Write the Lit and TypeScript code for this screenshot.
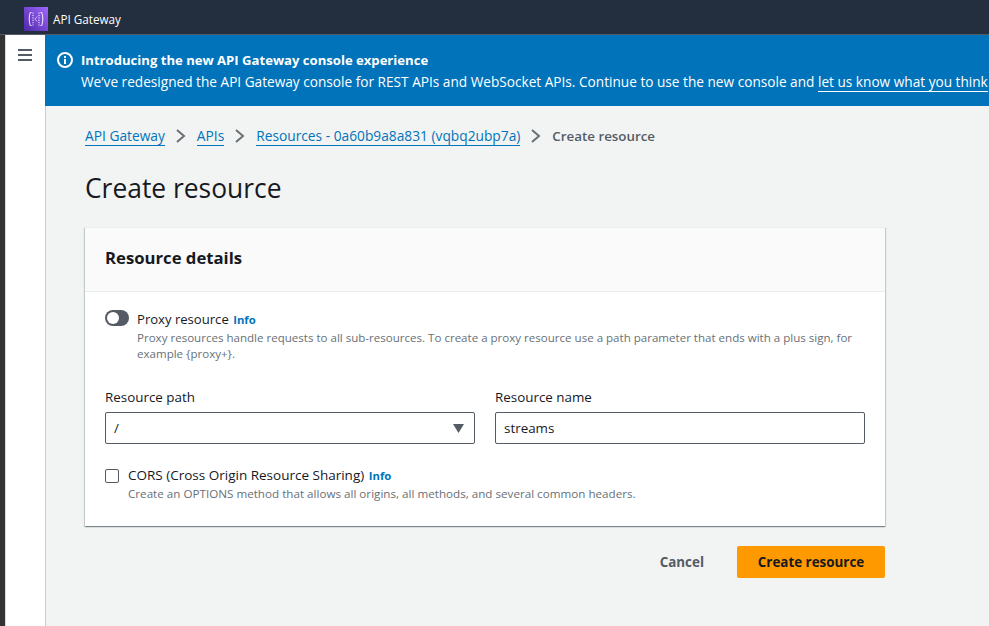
import { LitElement, html, css } from 'lit'
import { customElement } from 'lit/decorators.js'

@customElement('app-root')
export class AppRoot extends LitElement {
  static styles = css`
    :host {
      display: block;
      width: 989px;
      height: 626px;
      overflow: hidden;
      background: #f2f3f3;
      font-family: "Open Sans", "Noto Sans", sans-serif;
      font-size: 13.4px;
      color: #16191f;
    }
    .shell { display: flex; flex-direction: column; height: 626px; border-left: 5px solid #333; box-sizing: border-box; }
    .top {
      height: 35px;
      flex: none;
      margin-left: -5px;
      box-sizing: border-box;
      background: #232f3e;
      border-bottom: 1px solid #545b64;
      display: flex;
      align-items: center;
      padding: 4px 0 0 24px;
      gap: 5px;
      color: #fff;
      font-size: 11.7px;
    }
    .logo { width: 24px; height: 24px; display: block; }
    .body { flex: 1; display: flex; min-height: 0; }
    .side {
      width: 41px;
      flex: none;
      background: #fff;
      border-left: 1px solid #d5dbdb;
      border-right: 1px solid #c8cccc;
      padding: 14px 0 0 12px;
      box-sizing: border-box;
    }
    .burger { display: block; width: 14px; height: 12px; }
    .main { flex: 1; min-width: 0; overflow: hidden; margin-left: -1px; position: relative; }
    .flash {
      height: 71px;
      background: #0073bb;
      color: #fff;
      display: flex;
      padding: 14px 0 0 12px;
      box-sizing: border-box;
      gap: 8px;
      white-space: nowrap;
      font-size: 13.65px;
      line-height: 22px;
    }
    .flash svg { width: 16px; height: 16px; flex: none; margin-top: 3px; }
    .flash b { display: block; font-weight: 700; font-size: 13.1px; }
    .flash a { color: #fff; border-bottom: 1px solid #fff; }
    .content { padding: 19px 0 0 40px; width: 800px; }
    .crumbs { display: flex; align-items: center; height: 22px; font-size: 13.75px; white-space: nowrap; }
    .crumbs a { color: #0073bb; border-bottom: 1px solid #0073bb; line-height: 18px; }
    .crumbs svg { width: 12px; height: 14px; margin: 0 10px; flex: none; }
    .crumbs span { color: #545b64; font-weight: 600; font-size: 13.35px; }
    h1 { margin: 23px 0 0; font-size: 26.4px; font-weight: 400; line-height: 36px; height: 36px; }
    .card {
      margin-top: 21px;
      background: #fff;
      box-shadow: 0 1px 1px 0 rgba(0, 28, 36, 0.3), 1px 1px 1px 0 rgba(0, 28, 36, 0.15), -1px 1px 1px 0 rgba(0, 28, 36, 0.15);
      border-top: 1px solid #eaeded;
    }
    .card-head {
      height: 63px;
      background: #fafafa;
      border-bottom: 1px solid #eaeded;
      padding: 0 20px;
      display: flex;
      align-items: center;
      font-size: 16.7px;
      font-weight: 700;
    }
    .card-head span { margin-top: -4px; }
    .card-body { padding: 18px 20px 24px; }
    .opt { display: flex; align-items: flex-start; }
    .toggle {
      width: 24px;
      height: 16px;
      border-radius: 8px;
      background: #545b64;
      flex: none;
      margin: 0 8px 0 0;
      position: relative;
    }
    .toggle i { position: absolute; left: 2px; top: 2px; width: 12px; height: 12px; border-radius: 50%; background: #fff; }
    .check {
      width: 12px;
      height: 12px;
      border: 1px solid #545b64;
      border-radius: 2px;
      background: #fff;
      flex: none;
      margin: 3px 9px 0 0;
    }
    .opt-label { line-height: 18px; font-size: 13.5px; }
    .opt-label.proxy { font-size: 13.1px; }
    .info { color: #0073bb; font-size: 11.3px; font-weight: 700; margin-left: 1px; }
    .desc { color: #687078; font-size: 11.65px; line-height: 16px; margin-top: 1px; }
    .desc.proxy { font-size: 11.55px; }
    .fields { display: grid; grid-template-columns: 370px 370px; column-gap: 20px; margin-top: 26px; }
    .field label { display: block; line-height: 18px; margin-bottom: 6px; }
    .input {
      height: 32px;
      box-sizing: border-box;
      border: 1px solid #545b64;
      border-radius: 2px;
      background: #fff;
      padding: 0 8px;
      display: flex;
      align-items: center;
      justify-content: space-between;
    }
    .input svg { width: 11px; height: 9px; margin-right: 2px; }
    .cors { margin-top: 22px; }
    .actions { display: flex; justify-content: flex-end; align-items: center; gap: 33px; margin-top: 20px; }
    .cancel { color: #545b64; font-weight: 700; }
    .primary {
      width: 148px;
      height: 32px;
      background: #ff9900;
      border-radius: 2px;
      display: flex;
      align-items: center;
      justify-content: center;
      font-weight: 700;
    }
  `

  render () {
    return html`
<div class="shell">
  <div class="top">
    <svg class="logo" viewBox="0 0 24 24">
      <defs><linearGradient id="g" x1="0" y1="1" x2="1" y2="0"><stop offset="0" stop-color="#4d27a8"/><stop offset="1" stop-color="#a166ff"/></linearGradient></defs>
      <rect width="24" height="24" fill="url(#g)"/>
      <path d="M7.5 5.5H6.2C5.5 8 5.2 10 5.2 12s.3 4 1 6.5h1.3M16.5 5.5h1.3c.7 2.500 1 4.500 1 6.500s-.3 4-1 6.500h-1.300" fill="none" stroke="#fff" stroke-width="0.9"/>
      <path d="M9 5.500v13M15 5.500v13" stroke="#fff" stroke-width="1" stroke-dasharray="1.200 1.200"/>
      <path d="M13.200 9.500 10.800 12l2.400 2.500" fill="none" stroke="#d9c8ff" stroke-width="0.9"/>
    </svg>
    <span>API Gateway</span>
  </div>
  <div class="body">
    <div class="side">
      <svg class="burger" viewBox="0 0 14 12"><path d="M0 1h14M0 6h14M0 11h14" stroke="#545b64" stroke-width="2"/></svg>
    </div>
    <div class="main">
      <div class="flash">
        <svg viewBox="0 0 16 16"><circle cx="8" cy="8" r="7" fill="none" stroke="#fff" stroke-width="2"/><path d="M8 7v5" stroke="#fff" stroke-width="2"/><rect x="7" y="4" width="2" height="2" fill="#fff"/></svg>
        <div>
          <b>Introducing the new API Gateway console experience</b>
          We’ve redesigned the API Gateway console for REST APIs and WebSocket APIs. Continue to use the new console and <a>let us know what you think</a>
        </div>
      </div>
      <div class="content">
        <div class="crumbs">
          <a>API Gateway</a>
          ${this.chevron()}
          <a>APIs</a>
          ${this.chevron()}
          <a>Resources - 0a60b9a8a831 (vqbq2ubp7a)</a>
          ${this.chevron()}
          <span>Create resource</span>
        </div>
        <h1>Create resource</h1>
        <div class="card">
          <div class="card-head"><span>Resource details</span></div>
          <div class="card-body">
            <div class="opt">
              <div class="toggle"><i></i></div>
              <div>
                <div class="opt-label proxy">Proxy resource <span class="info">Info</span></div>
                <div class="desc proxy">Proxy resources handle requests to all sub-resources. To create a proxy resource use a path parameter that ends with a plus sign, for example {proxy+}.</div>
              </div>
            </div>
            <div class="fields">
              <div class="field">
                <label>Resource path</label>
                <div class="input"><span>/</span><svg viewBox="0 0 11 9"><path d="M0 0h11L5.500 9z" fill="#545b64"/></svg></div>
              </div>
              <div class="field">
                <label>Resource name</label>
                <div class="input"><span>streams</span></div>
              </div>
            </div>
            <div class="opt cors">
              <div class="check"></div>
              <div>
                <div class="opt-label">CORS (Cross Origin Resource Sharing) <span class="info">Info</span></div>
                <div class="desc">Create an OPTIONS method that allows all origins, all methods, and several common headers.</div>
              </div>
            </div>
          </div>
        </div>
        <div class="actions">
          <span class="cancel">Cancel</span>
          <div class="primary">Create resource</div>
        </div>
      </div>
    </div>
  </div>
</div>
`
  }

  chevron () {
    return html`<svg viewBox="0 0 12 14"><path d="M2 1l7 6-7 6" fill="none" stroke="#687078" stroke-width="2"/></svg>`
  }
}
